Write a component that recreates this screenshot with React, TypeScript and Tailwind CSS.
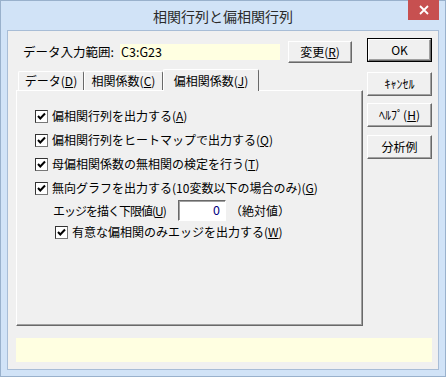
import React from 'react';

const font = "font-['Noto_Sans_CJK_JP','Noto_Sans_CJK_SC',sans-serif]";

const raised =
  'border border-t-white border-l-white border-r-[#696969] border-b-[#696969] shadow-[inset_-1px_-1px_0_#a0a0a0] bg-[#f0f0f0]';

const Button: React.FC<{ children: React.ReactNode; isDefault?: boolean; className?: string }> = ({
  children,
  isDefault = false,
  className = '',
}) => (
  <div
    className={`flex items-center justify-center text-[12px] leading-none text-black ${className} ${
      isDefault ? 'border border-black p-0' : ''
    }`}
  >
    <div className={`flex w-full h-full items-center justify-center ${raised}`}>{children}</div>
  </div>
);

const CheckBox: React.FC<{ label: React.ReactNode; className?: string }> = ({ label, className = '' }) => (
  <div className={`flex items-center ${className}`}>
    <div className="w-[13px] h-[13px] border border-t-[#333] border-l-[#333] border-r-[#777] border-b-[#777] bg-white flex items-center justify-center">
      <svg width="11" height="11" viewBox="0 0 11 11">
        <path d="M2 5 L4.3 7.5 L9 2.5" fill="none" stroke="#000" strokeWidth="2" />
      </svg>
    </div>
    <span className="ml-[4px] text-[12px] leading-none text-black whitespace-nowrap">{label}</span>
  </div>
);

const Tab: React.FC<{ children: React.ReactNode; selected?: boolean; className?: string }> = ({
  children,
  selected = false,
  className = '',
}) => (
  <div
    className={`flex items-center justify-center text-[12px] leading-none text-black border-t border-l border-r border-t-white border-l-white border-r-[#696969] bg-[#f0f0f0] rounded-t-[2px] ${
      selected ? 'h-[22px] relative z-10 -mb-px' : 'h-[19px]'
    } ${className}`}
  >
    {children}
  </div>
);

export default function App() {
  return (
    <div className={`w-[446px] h-[377px] flex flex-col bg-[#d1e3f7] border border-[#99b1cc] ${font}`}>
      {/* title bar */}
      <div className="h-[29px] grid grid-cols-[1fr_auto_1fr]">
        <div />
        <div className="flex items-center text-[14px] leading-none text-[#2b2b2b] pt-[1px]">相関行列と偏相関行列</div>
        <div className="flex justify-end items-start pr-[6px]">
          <div className="w-[31px] h-[20px] bg-[#c75050] flex items-center justify-center -mt-px">
            <svg width="10" height="10" viewBox="0 0 10 10">
              <path d="M1 1 L9 9 M9 1 L1 9" stroke="#fff" strokeWidth="1.8" />
            </svg>
          </div>
        </div>
      </div>

      {/* client area */}
      <div className="flex-1 mx-[6px] mb-[6px] border border-[#a8bdd6] bg-[#f0f0f0] flex flex-col">
        <div className="flex pt-[7px] pl-[8px]">
          {/* left column */}
          <div className="w-[347px] mt-[3px] flex flex-col">
            <div className="h-[22px] flex items-center">
              <span className="pl-[7px] w-[104px] text-[12.5px] leading-none text-black whitespace-nowrap">
                データ入力範囲:
              </span>
              <div className="w-[160px] h-[16px] bg-[#ffffe1] flex items-center pl-[1px] text-[12.5px] leading-none text-black">
                C3:G23
              </div>
              <Button className="ml-[8px] w-[64px] h-[22px]">
                変更(<u>R</u>)
              </Button>
            </div>

            <div className="mt-[6px] flex items-end h-[21px] pl-[2px]">
              <Tab className="w-[66px]">
                データ(<u>D</u>)
              </Tab>
              <Tab className="w-[79px]">
                相関係数(<u>C</u>)
              </Tab>
              <Tab selected className="w-[96px]">
                偏相関係数(<u>J</u>)
              </Tab>
            </div>

            <div className={`h-[236px] ${raised} flex flex-col pt-[13px]`}>
              <CheckBox className="h-[24px] pl-[18px]" label={<>偏相関行列を出力する(<u>A</u>)</>} />
              <CheckBox className="h-[24px] pl-[18px]" label={<>偏相関行列をヒートマップで出力する(<u>Q</u>)</>} />
              <CheckBox className="h-[24px] pl-[18px]" label={<>母偏相関係数の無相関の検定を行う(<u>T</u>)</>} />
              <CheckBox className="h-[24px] pl-[18px]" label={<>無向グラフを出力する(10変数以下の場合のみ)(<u>G</u>)</>} />
              <div className="h-[21px] flex items-center pl-[36px]">
                <span className="w-[125px] text-[12px] leading-none text-black whitespace-nowrap tracking-[-1px]">
                  エッジを描く下限値(<u>U</u>)
                </span>
                <div className="w-[48px] h-[21px] bg-white border border-t-[#696969] border-l-[#696969] border-r-white border-b-white shadow-[inset_1px_1px_0_#a0a0a0] flex items-center justify-end pr-[5px] text-[12.5px] leading-none text-[#000080]">
                  0
                </div>
                <span className="ml-[4px] text-[12px] leading-none text-black">（絶対値）</span>
              </div>
              <CheckBox className="h-[22px] pl-[38px]" label={<>有意な偏相関のみエッジを出力する(<u>W</u>)</>} />
            </div>
          </div>

          {/* right column */}
          <div className="ml-[4px] w-[65px] flex flex-col">
            <Button isDefault className="h-[24px]">
              OK
            </Button>
            <Button className="h-[24px] mt-[10px]">ｷｬﾝｾﾙ</Button>
            <Button className="h-[24px] mt-[7px]">
              ﾍﾙﾌﾟ(<u>H</u>)
            </Button>
            <Button className="h-[24px] mt-[8px]">分析例</Button>
          </div>
        </div>

        <div className="ml-[8px] mt-[12px] w-[416px] h-[24px] bg-[#ffffe1]" />
      </div>
    </div>
  );
}
